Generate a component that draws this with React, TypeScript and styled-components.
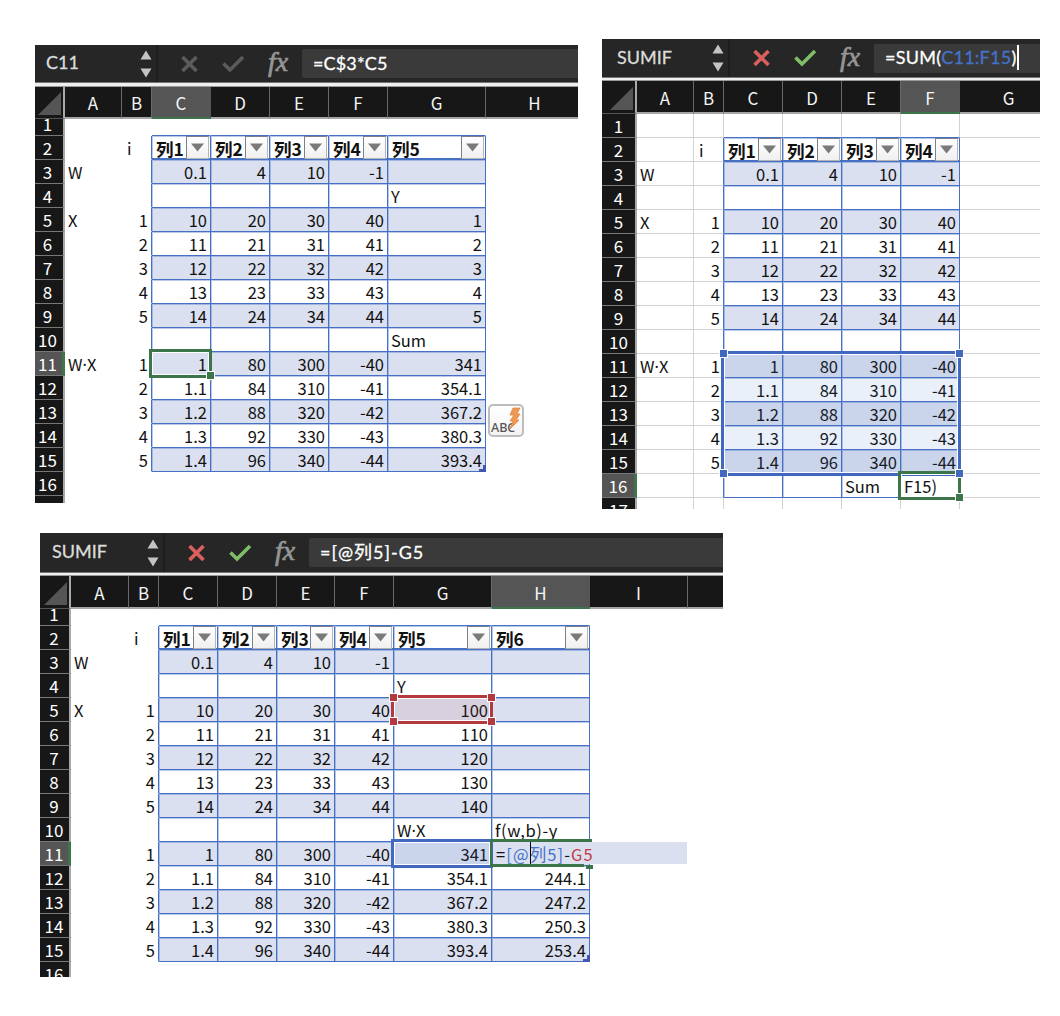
import React from "react";
import styled, { createGlobalStyle, css } from "styled-components";

const BLUE = "#4670c3";
const GREEN = "#3c7549";
const RED = "#b23a3e";
const STRIPE = "#dbe0f0";
const CELL_FONT = `"Noto Sans CJK SC", "Noto Sans", sans-serif`;
const BAR_FONT = `Lato, "Noto Sans CJK SC", sans-serif`;

const GlobalStyle = createGlobalStyle`
  * { box-sizing: border-box; }
  body { margin: 0; background: #fff; font-family: ${CELL_FONT}; }
`;

const Page = styled.main`
  width: 1060px;
  height: 1016px;
  padding: 39px 20px 0 35px;
  overflow: hidden;
  background: #fff;
`;
const TopRow = styled.div`
  display: flex;
  justify-content: space-between;
  align-items: flex-start;
  height: 494px;
`;
const Slot = styled.div<{ $top?: number; $left?: number }>`
  padding-top: ${(p) => p.$top ?? 0}px;
  padding-left: ${(p) => p.$left ?? 0}px;
`;
const Window = styled.section<{ $w: number; $h: number }>`
  display: flex;
  flex-direction: column;
  width: ${(p) => p.$w}px;
  height: ${(p) => p.$h}px;
  overflow: hidden;
`;

/* Formula bar */
const Bar = styled.header<{ $h: number; $lead: number }>`
  flex: none;
  display: grid;
  grid-template-columns: ${(p) => 100 + p.$lead}px 23px 23px 41px 43px 37px 1fr;
  height: ${(p) => p.$h}px;
  align-items: center;
  background: #262626;
`;
const NameBox = styled.div<{ $pad: number }>`
  padding: 0 0 3px ${(p) => p.$pad}px;
  color: #dcdcdc;
  font: 400 18px/24px ${BAR_FONT};
  -webkit-text-stroke: 0.3px currentColor;
`;
const Spinner = styled.div`
  align-self: stretch;
  display: flex;
  align-items: center;
  padding-left: 5px;
  border-right: 2px solid #1e1e1e;
`;
const IconSlot = styled.div`
  display: flex;
  align-items: center;
`;
const Fx = styled.div`
  color: #959595;
  font: italic 400 28px/28px "Liberation Serif", serif;
  -webkit-text-stroke: 0.7px #959595;
  padding-left: 3px;
  margin-top: -3px;
`;
const FormulaInput = styled.div<{ $h: number; $track: number }>`
  display: flex;
  align-items: center;
  height: ${(p) => p.$h}px;
  padding: 0 0 2px 11px;
  border-radius: 2px 0 0 2px;
  background: #3a3a3a;
  color: #fff;
  font: 400 18px/24px ${BAR_FONT};
  letter-spacing: ${(p) => p.$track}px;
  -webkit-text-stroke: 0.3px currentColor;
  white-space: pre;
`;
const Tint = styled.span<{ $c: string }>`
  color: ${(p) => p.$c};
`;
const BarCaret = styled.span`
  width: 2px;
  height: 25px;
  margin: 1px 0 0 0;
  background: #fff;
`;
const Seam = styled.div<{ $h: number }>`
  flex: none;
  height: ${(p) => p.$h}px;
  background: #eef0ee;
  border-top: 1px solid #777;
  border-bottom: 1px solid #9a9a9a;
`;

/* Grid */
const Line = styled.div<{ $cols: string; $h: number; $end?: boolean }>`
  flex: none;
  display: grid;
  grid-template-columns: ${(p) => p.$cols};
  height: ${(p) => p.$h}px;
  align-content: ${(p) => (p.$end ? "end" : "start")};
  ${(p) => p.$h < 24 && "overflow: hidden;"}
`;
const Corner = styled.div<{ $h: number }>`
  display: flex;
  align-items: flex-end;
  justify-content: flex-end;
  height: ${(p) => p.$h}px;
  padding: 0 2px 3px 0;
  background: #171717;
  border-right: 2px solid #a9a9a9;
  border-bottom: 1px solid #555;
`;
const ColHead = styled.div<{ $h: number; $on?: boolean }>`
  height: ${(p) => p.$h}px;
  padding-top: 2px;
  display: flex;
  align-items: center;
  justify-content: center;
  background: ${(p) => (p.$on ? "#555" : "#171717")};
  border-right: 1px solid ${(p) => (p.$on ? "#555" : "#696969")};
  border-bottom: 2px solid ${(p) => (p.$on ? GREEN : "#a5a5a5")};
  color: #f5f5f5;
  font-size: 17px;
  line-height: 24px;
`;
const RowHead = styled.div<{ $on?: boolean; $pad: number }>`
  display: flex;
  justify-content: center;
  height: 24px;
  padding: 0 ${(p) => p.$pad - (p.$on ? 1 : 0)}px 0 0;
  background: ${(p) => (p.$on ? "#555" : "#171717")};
  border-right: ${(p) => (p.$on ? `3px solid ${GREEN}` : "2px solid #a9a9a9")};
  border-bottom: 1px solid #777;
  color: #fff;
  font-size: 17px;
  line-height: 24px;
`;
const Cell = styled.div<{
  $bg: string; $r: string; $b: string; $thick?: boolean; $left?: boolean; $head?: boolean; $inner?: boolean; $indent: number;
}>`
  position: relative;
  display: flex;
  justify-content: ${(p) => (p.$left ? "flex-start" : "flex-end")};
  height: 24px;
  padding: 1px 3px 0 ${(p) => p.$indent}px;
  background: ${(p) => p.$bg};
  border-right: 1px solid ${(p) => p.$r};
  border-bottom: ${(p) => (p.$thick ? 2 : 1)}px solid ${(p) => p.$b};
  ${(p) => p.$inner && "box-shadow: inset 1px 1px 0 rgba(70, 112, 195, 0.38);"}
  color: #111;
  font-size: 16.5px;
  line-height: 23px;
  white-space: pre;
  ${(p) =>
    p.$head &&
    css`
      justify-content: space-between;
      padding-right: 1px;
      padding-top: 0;
      font-weight: 700;
      font-size: 17.5px;
      line-height: 25px;
    `}
`;
const Label = styled.span<{ $track: number }>`
  letter-spacing: ${(p) => p.$track}px;
`;
const Dot = styled.span`
  font-family: "Noto Sans", sans-serif;
`;
const FilterButton = styled.button`
  flex: none;
  display: flex;
  align-items: center;
  justify-content: center;
  width: 23px;
  height: 23px;
  padding: 0;
  border: 1px solid #7d8088;
  border-right-color: #b5b5b5;
  border-bottom-color: #b5b5b5;
  background: linear-gradient(#fff, #f0f0f0);
`;

/* Range outlines drawn over the cells */
const Range = styled.div<{ $w: number; $h: number; $c: string; $fill: string }>`
  position: absolute;
  z-index: 2;
  left: -3px;
  top: -3px;
  width: ${(p) => p.$w + 4}px;
  height: ${(p) => p.$h + 5}px;
  border: 3px solid ${(p) => p.$c};
  background: ${(p) => p.$fill};
  box-shadow: inset 0 0 0 1px #fff;
`;
const Handle = styled.i<{ $c: string; $x: "left" | "right"; $y: "top" | "bottom" }>`
  position: absolute;
  ${(p) => p.$x}: ${(p) => (p.$x === "left" ? -5 : -6)}px;
  ${(p) => p.$y}: -5px;
  width: 9px;
  height: 9px;
  border: 1px solid #fff;
  background: ${(p) => p.$c};
`;
const Editor = styled.div<{ $w: number }>`
  position: absolute;
  z-index: 3;
  left: 1px;
  top: 0;
  width: ${(p) => p.$w}px;
  height: 22px;
  display: flex;
  align-items: center;
  padding: 2px 0 0 3px;
  background: ${STRIPE};
  line-height: 22px;
  letter-spacing: 1.1px;
`;
const EditorEdge = styled.i<{ $top: number; $left: number; $w: number; $h: number }>`
  position: absolute;
  z-index: 4;
  left: ${(p) => p.$left}px;
  top: ${(p) => p.$top}px;
  width: ${(p) => p.$w}px;
  height: ${(p) => p.$h}px;
  background: ${GREEN};
`;
const EditCaret = styled.span`
  width: 1px;
  height: 22px;
  margin: -2px -1px 0 0;
  background: #000;
  z-index: 1;
`;
const TableEnd = styled.svg`
  position: absolute;
  right: -1px;
  bottom: -1px;
`;
const FlashFill = styled.div`
  position: absolute;
  z-index: 3;
  left: 100px;
  top: 4px;
  width: 36px;
  height: 33px;
  padding: 15px 0 0 1px;
  border: 2px solid #bdbdbd;
  border-radius: 5px;
  background: linear-gradient(#fff, #f3f3f3);
  color: #555;
  font: 500 12.5px/14px "Noto Sans", sans-serif;
`;
const Bolt = styled.svg`
  position: absolute;
  left: 19px;
  top: 1px;
`;

const Cross = ({ c }: { c: string }) => (
  <svg width="17" height="18" viewBox="0 0 17 18">
    <path d="M1.5 2 L15.5 16 M15.5 2 L1.5 16" stroke={c} strokeWidth="3.7" fill="none" />
  </svg>
);
const Check = ({ c }: { c: string }) => (
  <svg width="23" height="18" viewBox="0 0 23 18">
    <path d="M1.5 8.5 L8 15 L21 2" stroke={c} strokeWidth="3.6" fill="none" />
  </svg>
);
const Arrows = () => (
  <svg width="12" height="28" viewBox="0 0 12 28">
    <path d="M0.5 9.5 L6 0.5 L11.5 9.5Z M0.5 18.5 H11.5 L6 27.5Z" fill="#c4c4c4" />
  </svg>
);

function CellText({ text }: { text: string }) {
  if (text === "W·X") {
    return <span>W<Dot>·</Dot>X</span>;
  }
  return <Label $track={text.startsWith("f(") ? 0.6 : 0}>{text}</Label>;
}

type SheetProps = {
  width: number;
  height: number;
  barH: number;
  inputH: number;
  lead: number;
  namePad: number;
  name: string;
  editing?: boolean;
  formula: React.ReactNode;
  track: number;
  seam: number;
  headH: number;
  cols: number[];
  activeCol: number;
  activeRow: number;
  firstH: number;
  lastRow: number;
  lastH: number;
  rowPad: number;
  gridlines?: boolean;
  tableCols: number;
  tableEnd: number;
  rows: Record<number, string[]>;
  extras: Record<string, React.ReactNode>;
};

function Sheet(p: SheetProps) {
  const cols = p.cols.map((w) => w + "px").join(" ");
  const count = p.cols.length - 1;
  const grid = p.gridlines ? "#d2d2d2" : "transparent";
  const lastCol = 1 + p.tableCols;
  const rowNumbers = Array.from({ length: p.lastRow }, (_, i) => i + 1);
  return (
    <Window $w={p.width} $h={p.height}>
      <Bar $h={p.barH} $lead={p.lead}>
        <NameBox $pad={p.namePad}>{p.name}</NameBox>
        <Spinner><Arrows /></Spinner>
        <div />
        <IconSlot><Cross c={p.editing ? "#d9605c" : "#5b5b5b"} /></IconSlot>
        <IconSlot><Check c={p.editing ? "#7fbd68" : "#5b5b5b"} /></IconSlot>
        <Fx>fx</Fx>
        <FormulaInput $h={p.inputH} $track={p.track}>{p.formula}</FormulaInput>
      </Bar>
      <Seam $h={p.seam} />
      <Line $cols={cols} $h={p.headH}>
        <Corner $h={p.headH}>
          <svg width="23" height="23" viewBox="0 0 23 23"><path d="M23 0V23H0Z" fill="#555" /></svg>
        </Corner>
        {Array.from({ length: count }, (_, c) => (
          <ColHead key={c} $h={p.headH} $on={c === p.activeCol}>{"ABCDEFGHIJ"[c]}</ColHead>
        ))}
      </Line>
      {rowNumbers.map((r) => {
        const inRows = r >= 2 && r <= p.tableEnd;
        return (
          <Line key={r} $cols={cols} $h={r === 1 ? p.firstH : r === p.lastRow ? p.lastH : 24} $end={r === 1}>
            <RowHead $on={r === p.activeRow} $pad={p.rowPad}>{r}</RowHead>
            {Array.from({ length: count }, (_, c) => {
              const text = p.rows[r]?.[c] ?? "";
              const inCols = c >= 2 && c <= lastCol;
              const inTable = inRows && inCols;
              const head = r === 2 && inCols;
              const striped = inTable && r >= 3 && r <= 15 && r % 2 === 1;
              return (
                <Cell
                  key={c}
                  $bg={striped ? STRIPE : "#fff"}
                  $r={inRows && c >= 1 && c <= lastCol ? BLUE : grid}
                  $b={inCols && r >= 1 && r <= p.tableEnd ? BLUE : grid}
                  $thick={head}
                  $inner={inTable}
                  $left={!/^-?[\d.]+$/.test(text)}
                  $head={head}
                  $indent={c === 1 ? 5 : head ? 4 : 3}
                >
                  {text && <CellText text={text} />}
                  {head && (
                    <FilterButton>
                      <svg width="13" height="9" viewBox="0 0 13 9"><path d="M0 0.5H13L6.5 8.5Z" fill="#7a7a7a" /></svg>
                    </FilterButton>
                  )}
                  {p.extras["ABCDEFGHIJ"[c] + r]}
                </Cell>
              );
            })}
          </Line>
        );
      })}
    </Window>
  );
}

const weights = ["0.1", "4", "10", "-1"];
const xs = [0, 1, 2, 3, 4].map((i) => [10, 20, 30, 40].map((n) => String(n + i)));
const products = [
  ["1", "80", "300", "-40"],
  ["1.1", "84", "310", "-41"],
  ["1.2", "88", "320", "-42"],
  ["1.3", "92", "330", "-43"],
  ["1.4", "96", "340", "-44"],
];
const sums = ["341", "354.1", "367.2", "380.3", "393.4"];

function buildRows(heads: number, y: string[], sum: string[], last: string[], labelWX: string): Record<number, string[]> {
  const rows: Record<number, string[]> = {
    2: ["", "i", ...Array.from({ length: heads }, (_, i) => `列${i + 1}`)],
    3: ["W", "", ...weights],
  };
  for (let i = 0; i < 5; i++) {
    rows[5 + i] = [i === 0 ? "X" : "", String(i + 1), ...xs[i], y[i] ?? ""];
    rows[11 + i] = [i === 0 ? labelWX : "", String(i + 1), ...products[i], sum[i] ?? "", last[i] ?? ""];
  }
  return rows;
}

const rowsA = buildRows(5, ["1", "2", "3", "4", "5"], sums, [], "W·X");
rowsA[4] = ["", "", "", "", "", "", "Y"];
rowsA[10] = ["", "", "", "", "", "", "Sum"];

const rowsB = buildRows(4, [], [], [], "W·X");
rowsB[16] = ["", "", "", "", "Sum", "F15)"];

const rowsC = buildRows(6, ["100", "110", "120", "130", "140"], sums, ["", "244.1", "247.2", "250.3", "253.4"], "");
rowsC[4] = ["", "", "", "", "", "", "Y"];
rowsC[10] = ["", "", "", "", "", "", "W·X", "f(w,b)-y"];

const Handles = ({ c }: { c: string }) => (
  <>
    <Handle $c={c} $x="left" $y="top" />
    <Handle $c={c} $x="right" $y="top" />
    <Handle $c={c} $x="left" $y="bottom" />
    <Handle $c={c} $x="right" $y="bottom" />
  </>
);
const EndMark = () => (
  <TableEnd width="7" height="7" viewBox="0 0 7 7">
    <path d="M4 0H7V7H0V4H4Z" fill="#4258b0" />
  </TableEnd>
);

export default function App() {
  return (
    <Page>
      <GlobalStyle />
      <TopRow>
        <Slot $top={6}>
          <Sheet
            width={543} height={458} barH={37} inputH={29} lead={0} namePad={11}
            name="C11" formula="=C$3*C5" track={0.15} seam={5} headH={32}
            cols={[30, 57, 30, 59, 59, 59, 59, 98, 98]} activeCol={2} activeRow={11}
            firstH={17} lastRow={17} lastH={7} rowPad={3} tableCols={5} tableEnd={15}
            rows={rowsA}
            extras={{
              C11: (
                <Range $w={59} $h={24} $c={GREEN} $fill="transparent">
                  <Handle $c={GREEN} $x="right" $y="bottom" />
                </Range>
              ),
              G13: (
                <FlashFill>
                  ABC
                  <Bolt width="12" height="23" viewBox="0 0 12 23">
                    <path d="M4 1H11L8 7H11L7 13H10L1 22L4 14H1L5 8H1Z" fill="#ee9a55" stroke="#e08440" strokeWidth="0.8" />
                  </Bolt>
                </FlashFill>
              ),
              G15: <EndMark />,
            }}
          />
        </Slot>
        <Slot>
          <Sheet
            width={438} height={470} barH={38} inputH={29} lead={5} namePad={15}
            name="SUMIF" editing track={0.25}
            formula={<><span>=SUM(</span><Tint $c="#4472c9">C11:F15</Tint><span>)</span><BarCaret /></>}
            seam={4} headH={33}
            cols={[35, 57, 30, 59, 59, 59, 59, 98]} activeCol={5} activeRow={16}
            firstH={24} lastRow={17} lastH={11} rowPad={0} gridlines tableCols={4} tableEnd={16}
            rows={rowsB}
            extras={{
              C11: (
                <Range $w={236} $h={120} $c="#4069bf" $fill="rgba(68,114,196,.11)">
                  <Handles c="#4069bf" />
                </Range>
              ),
              F16: (
                <Range $w={59} $h={24} $c={GREEN} $fill="transparent">
                  <Handle $c="#4069bf" $x="right" $y="top" />
                  <Handle $c={GREEN} $x="right" $y="bottom" />
                </Range>
              ),
            }}
          />
        </Slot>
      </TopRow>
      <Slot $left={5}>
        <Sheet
          width={683} height={444} barH={39} inputH={29} lead={2} namePad={12}
          name="SUMIF" editing formula="=[@列5]-G5" track={1} seam={4} headH={33}
          cols={[31, 58, 30, 59, 59, 58, 59, 98, 98, 98, 98]} activeCol={7} activeRow={11}
          firstH={17} lastRow={16} lastH={15} rowPad={1} tableCols={6} tableEnd={15}
          rows={rowsC}
          extras={{
            G5: (
              <Range $w={98} $h={24} $c={RED} $fill="rgba(190,70,80,.1)">
                <Handles c={RED} />
              </Range>
            ),
            G11: <Range $w={98} $h={24} $c="#4069bf" $fill="rgba(68,114,196,.11)" />,
            H11: (
              <>
                <Editor $w={194}>
                  <span>=</span>
                  <Tint $c="#4472c9">[@</Tint>
                  <EditCaret />
                  <Tint $c="#4472c9">列5]</Tint>
                  <span>-</span>
                  <Tint $c="#c23b3f">G5</Tint>
                </Editor>
                <EditorEdge $left={-2} $top={-3} $w={102} $h={3} />
                <EditorEdge $left={-2} $top={-3} $w={2} $h={28} />
                <EditorEdge $left={-2} $top={22} $w={94} $h={3} />
                <EditorEdge $left={94} $top={23} $w={7} $h={4} />
              </>
            ),
            H15: <EndMark />,
          }}
        />
      </Slot>
    </Page>
  );
}
